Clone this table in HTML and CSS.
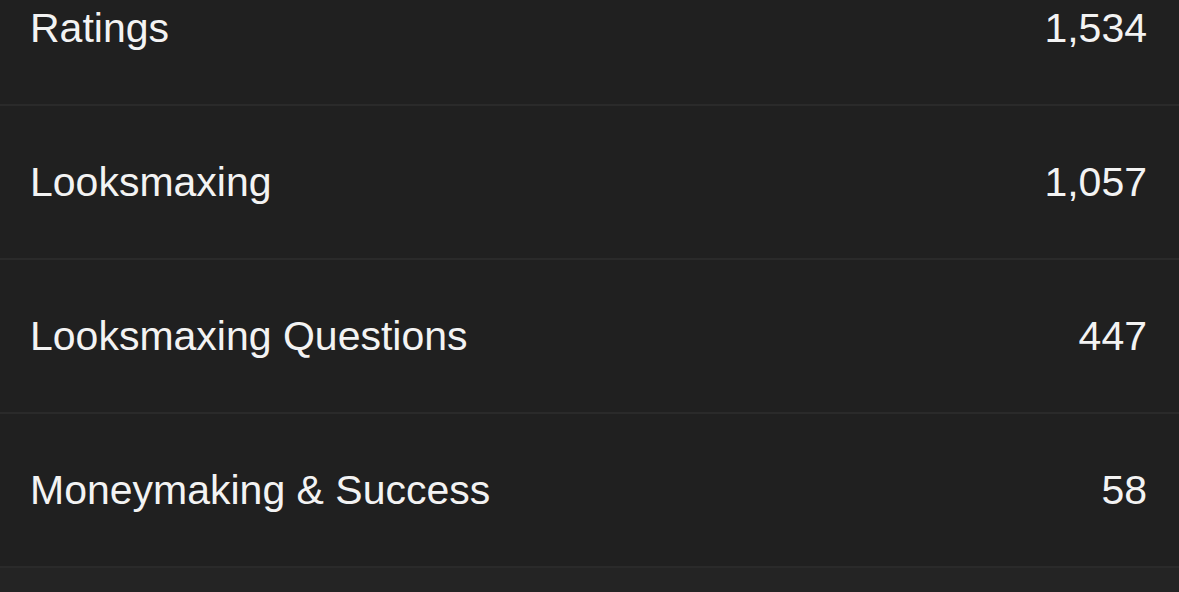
FILE: index.html
```html
<!DOCTYPE html>
<html>

<head>
    <meta charset='utf-8'>
    <title>Forums</title>
    <meta name='viewport' content='width=device-width, initial-scale=1'>
    <link rel="stylesheet" href="styles.css">
</head>

<body>
    <ul class="forum_list">
        <li class="forum_row">
            <span class="forum_name">Ratings</span>
            <span class="forum_count">1,534</span>
        </li>
        <li class="forum_row">
            <span class="forum_name">Looksmaxing</span>
            <span class="forum_count">1,057</span>
        </li>
        <li class="forum_row">
            <span class="forum_name">Looksmaxing Questions</span>
            <span class="forum_count">447</span>
        </li>
        <li class="forum_row">
            <span class="forum_name">Moneymaking &amp; Success</span>
            <span class="forum_count">58</span>
        </li>
        <li class="forum_row next"></li>
    </ul>
</body>

</html>
```

FILE: styles.css
```css
* {
    margin: 0;
    padding: 0;
}

html,
body {
    height: 100%;
    overflow: hidden;
}

body {
    background-color: #202020;
    font-family: "Liberation Sans", Arial, sans-serif;
    color: #f3f3f3;
}

.forum_list {
    list-style-type: none;
    margin-top: -48px;
}

.forum_row {
    display: flex;
    justify-content: space-between;
    align-items: center;
    height: 152px;
    padding: 0 32px 0 30px;
    border-bottom: 2px solid #2a2a2a;
    font-size: 41px;
}

.forum_row.next {
    background-color: #242424;
}
```
